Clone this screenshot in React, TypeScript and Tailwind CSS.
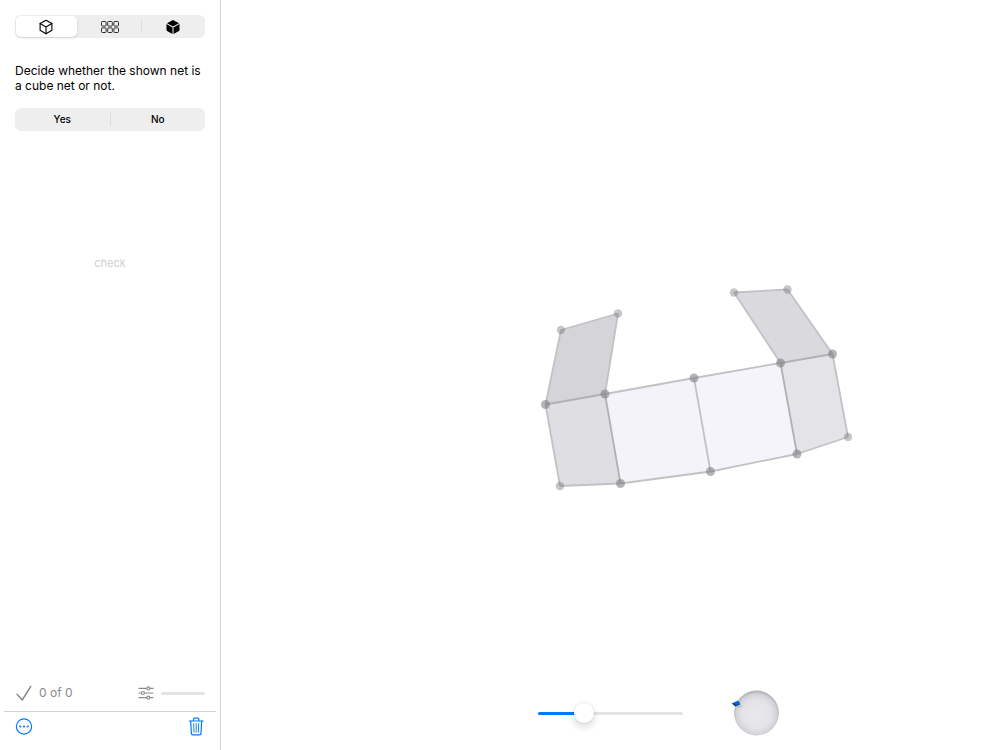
import { useState } from 'react';

type Point = [number, number];

const vertices: Record<string, Point> = {
  a: [340, 330],
  b: [397, 313.5],
  c: [384, 394],
  d: [324.5, 404.5],
  e: [339, 486],
  f: [399.5, 483.5],
  g: [473, 378],
  h: [489.5, 471.5],
  i: [559.5, 363],
  j: [576, 454],
  k: [611.5, 354],
  l: [627, 437],
  m: [513, 292.5],
  n: [566.5, 289.5],
};

const faces = [
  { corners: 'abcd', fill: '#d5d4d9' },
  { corners: 'dcfe', fill: '#dfdee3' },
  { corners: 'cghf', fill: '#f4f3f9' },
  { corners: 'gijh', fill: '#f5f4fa' },
  { corners: 'iklj', fill: '#e4e3e8' },
  { corners: 'mnki', fill: '#dad9de' },
];

const edges = ['ab', 'bc', 'ad', 'de', 'ef', 'cg', 'gh', 'fh', 'gi', 'hj', 'kl', 'jl', 'mn', 'mi', 'nk'];
const foldedEdges = ['dc', 'cf', 'ij', 'ik'];

// Vertices where several faces meet are drawn darker
const sharedVertices = 'cdfghijk';

const CubeIcon = () => (
  <svg className="h-4 w-4" viewBox="0 0 16 16" fill="none" stroke="currentColor" strokeWidth="1.1" strokeLinejoin="round" strokeLinecap="round" aria-hidden="true">
    <path d="M8 1.3 13.9 4.6v6.7L8 14.7 2.1 11.3V4.6Z" />
    <path d="M2.1 4.6 8 8l5.9-3.4M8 8v6.7" />
  </svg>
);

const NetIcon = () => (
  <svg className="h-3.5 w-5" viewBox="0 0 20 14" fill="none" stroke="#2c2c2e" strokeWidth="1" aria-hidden="true">
    {[1.5, 7.7, 13.9].map((x) =>
      [1.5, 7.9].map((y) => <rect key={`${x}-${y}`} x={x} y={y} width="4.6" height="4.6" rx="0.8" />)
    )}
  </svg>
);

const SolidCubeIcon = () => (
  <svg className="h-4 w-4" viewBox="0 0 16 16" fill="currentColor" aria-hidden="true">
    <path d="M8 .9 14 4.2 8 7.5 2 4.2Z" />
    <path d="M1.5 5.1 7.5 8.4v6.7l-5.4-3.1a1.2 1.2 0 0 1-.6-1Z" />
    <path d="M14.5 5.1 8.5 8.4v6.7l5.4-3.1a1.2 1.2 0 0 0 .6-1Z" />
  </svg>
);

const modes = [
  { id: 'decide', label: 'Decide', icon: <CubeIcon /> },
  { id: 'nets', label: 'Nets', icon: <NetIcon /> },
  { id: 'cube', label: 'Cube', icon: <SolidCubeIcon /> },
];

const CubeNet = () => {
  const line = (edge: string) => {
    const [x1, y1] = vertices[edge[0]];
    const [x2, y2] = vertices[edge[1]];
    return <line key={edge} x1={x1} y1={y1} x2={x2} y2={y2} />;
  };

  return (
    <svg className="min-h-0 w-full flex-1" viewBox="0 0 779 675" role="img" aria-label="Partly folded net">
      {faces.map(({ corners, fill }) => (
        <polygon key={corners} points={corners.split('').map((c) => vertices[c].join(',')).join(' ')} fill={fill} />
      ))}
      <g stroke="#c2c2c5" strokeWidth="1.8">{edges.map(line)}</g>
      <g stroke="#b1b1b5" strokeWidth="1.8">{foldedEdges.map(line)}</g>
      {Object.entries(vertices).map(([name, [x, y]]) => (
        <circle
          key={name}
          cx={x}
          cy={y}
          r={sharedVertices.includes(name) ? 4.5 : 4.2}
          fill="#77777c"
          fillOpacity={sharedVertices.includes(name) ? 0.54 : 0.42}
        />
      ))}
    </svg>
  );
};

const OrientationBall = () => (
  <svg className="h-12 w-[50px]" viewBox="0 0 50 48" role="img" aria-label="Orientation">
    <defs>
      <radialGradient id="ball" cx="50%" cy="53%" r="53%">
        <stop offset="0" stopColor="#e9e8ed" />
        <stop offset="0.6" stopColor="#e4e3e8" />
        <stop offset="0.85" stopColor="#d4d3d8" />
        <stop offset="1" stopColor="#acacaf" />
      </radialGradient>
    </defs>
    <circle cx="26.5" cy="24" r="22.4" fill="url(#ball)" />
    <path d="m6 18 4-1.5 2.5 1-5 1.2Z" fill="#b5b5ba" />
    <path d="m1.8 14.2 6-2.4 1.3.8 1.4 2.6-5.2 2.2Z" fill="#0868d8" />
    <path d="m1.8 14.2 4.5.7-1 2.5Z" fill="#064492" />
    <path d="m5.3 17.4 1-2.5 4.2.3Z" fill="#0552b0" />
  </svg>
);

const App = () => {
  const [mode, setMode] = useState('decide');
  const [answer, setAnswer] = useState<string | null>(null);
  const [fold, setFold] = useState(29);

  return (
    <div className="flex h-screen bg-white font-['Inter','Liberation_Sans',sans-serif] text-black">
      {/* Sidebar */}
      <aside className="flex w-[221px] shrink-0 flex-col border-r border-[#d2d2d4]">
        <div className="flex flex-1 flex-col px-[15px] pt-[15px]">
          <div className="grid h-[23px] grid-cols-3 rounded-md bg-[#eeeeef] p-px">
            {modes.map(({ id, label, icon }) => (
              <button
                key={id}
                type="button"
                aria-label={label}
                aria-pressed={mode === id}
                onClick={() => setMode(id)}
                className={`flex items-center justify-center rounded-[5px] ${mode === id ? 'mr-0.5 bg-white shadow-sm' : ''} ${
                  id === 'cube' ? 'bg-[linear-gradient(#dcdcde,#dcdcde)] bg-[length:1px_13px] bg-left bg-no-repeat' : ''
                }`}
              >
                {icon}
              </button>
            ))}
          </div>

          <p className="mt-[25px] text-[12px] leading-[15px]">
            Decide whether the shown net is a cube net or not.
          </p>

          <div className="mt-[15px] flex h-[23px] items-center rounded-md bg-[#eeeeef] text-[10px] font-medium">
            <button
              type="button"
              aria-pressed={answer === 'yes'}
              onClick={() => setAnswer('yes')}
              className={`h-full flex-1 rounded-md ${answer === 'yes' ? 'bg-white' : ''}`}
            >
              Yes
            </button>
            <span className="h-[13px] w-px bg-[#dcdcde]"></span>
            <button
              type="button"
              aria-pressed={answer === 'no'}
              onClick={() => setAnswer('no')}
              className={`h-full flex-1 rounded-md ${answer === 'no' ? 'bg-white' : ''}`}
            >
              No
            </button>
          </div>

          <button
            type="button"
            disabled={answer === null}
            className="mt-[124px] self-center text-[11px] leading-4 text-[#007aff] disabled:text-[#cfcfd1]"
          >
            check
          </button>
        </div>

        {/* Score and difficulty */}
        <div className="flex h-9 items-center px-[15px] text-[#8a8a8e]">
          <svg className="h-[18px] w-[18px]" viewBox="0 0 18 18" fill="none" stroke="currentColor" strokeWidth="1.5" strokeLinecap="round" strokeLinejoin="round" aria-hidden="true">
            <path d="m2.2 10.4 5 5.6 8.6-13.6" />
          </svg>
          <span className="ml-[6px] text-[12px]">0 of 0</span>
          <svg className="ml-auto h-4 w-4" viewBox="0 0 16 16" fill="none" stroke="currentColor" strokeWidth="1.1" strokeLinecap="round" aria-hidden="true">
            <path d="M1 3.4h7.7M12 3.4h3M1 8h2.2M6.6 8H15M1 12.6h7.7M12 12.6h3" />
            <circle cx="10.4" cy="3.4" r="1.5" />
            <circle cx="4.9" cy="8" r="1.5" />
            <circle cx="10.4" cy="12.6" r="1.5" />
          </svg>
          <progress
            aria-label="Difficulty"
            value={0}
            max={1}
            className="ml-[7px] h-[3px] w-11 appearance-none overflow-hidden rounded-full [&::-webkit-progress-bar]:bg-[#e3e3e5] [&::-webkit-progress-value]:bg-[#007aff]"
          />
        </div>

        {/* Toolbar */}
        <div className="mx-1 flex h-[39px] items-start justify-between border-t border-[#d2d2d4] px-[11px] pt-[5px] text-[#007aff]">
          <button type="button" aria-label="More">
            <svg className="h-5 w-[18px]" viewBox="0 0 18 20" fill="none" stroke="currentColor" strokeWidth="1.2" aria-hidden="true">
              <circle cx="9" cy="9.5" r="7.6" />
              <g fill="currentColor" stroke="none">
                <circle cx="5.3" cy="9.5" r="1.1" />
                <circle cx="9" cy="9.5" r="1.1" />
                <circle cx="12.7" cy="9.5" r="1.1" />
              </g>
            </svg>
          </button>
          <button type="button" aria-label="Delete">
            <svg className="h-5 w-[18px]" viewBox="0 0 18 20" fill="none" stroke="currentColor" strokeWidth="1.2" strokeLinecap="round" strokeLinejoin="round" aria-hidden="true">
              <path d="M2.3 4h13.8M6.5 4V2.2a1.1 1.1 0 0 1 1.1-1.1h3.2a1.1 1.1 0 0 1 1.1 1.1V4" />
              <path d="m3.7 4 .7 12.4a1.5 1.5 0 0 0 1.5 1.4h6.6a1.5 1.5 0 0 0 1.5-1.4L14.7 4" />
              <path d="m6.7 6.6.3 8.6M9.2 6.6v8.6M11.7 6.6l-.3 8.6" strokeWidth="0.9" />
            </svg>
          </button>
        </div>
      </aside>

      {/* Scene */}
      <main className="flex min-w-0 flex-1 flex-col">
        <CubeNet />
        <div className="grid h-[75px] shrink-0 grid-cols-[1fr_145px_1fr] items-center">
          <input
            type="range"
            aria-label="Fold"
            min={0}
            max={100}
            value={fold}
            onChange={(e) => setFold(Number(e.target.value))}
            style={{ '--fill': `${fold}%` } as React.CSSProperties}
            className="col-start-2 mt-0.5 h-5 w-full appearance-none bg-transparent [&::-webkit-slider-runnable-track]:h-[3px] [&::-webkit-slider-runnable-track]:rounded-full [&::-webkit-slider-runnable-track]:bg-[linear-gradient(to_right,#007aff_var(--fill),#e3e3e5_var(--fill))] [&::-webkit-slider-thumb]:-mt-[9px] [&::-webkit-slider-thumb]:h-5 [&::-webkit-slider-thumb]:w-5 [&::-webkit-slider-thumb]:appearance-none [&::-webkit-slider-thumb]:rounded-full [&::-webkit-slider-thumb]:bg-white [&::-webkit-slider-thumb]:shadow-[0_4px_9px_rgba(0,0,0,0.16),0_0_2px_rgba(0,0,0,0.14)]"
          />
          <div className="ml-[47px]">
            <OrientationBall />
          </div>
        </div>
      </main>
    </div>
  );
};

export default App;
